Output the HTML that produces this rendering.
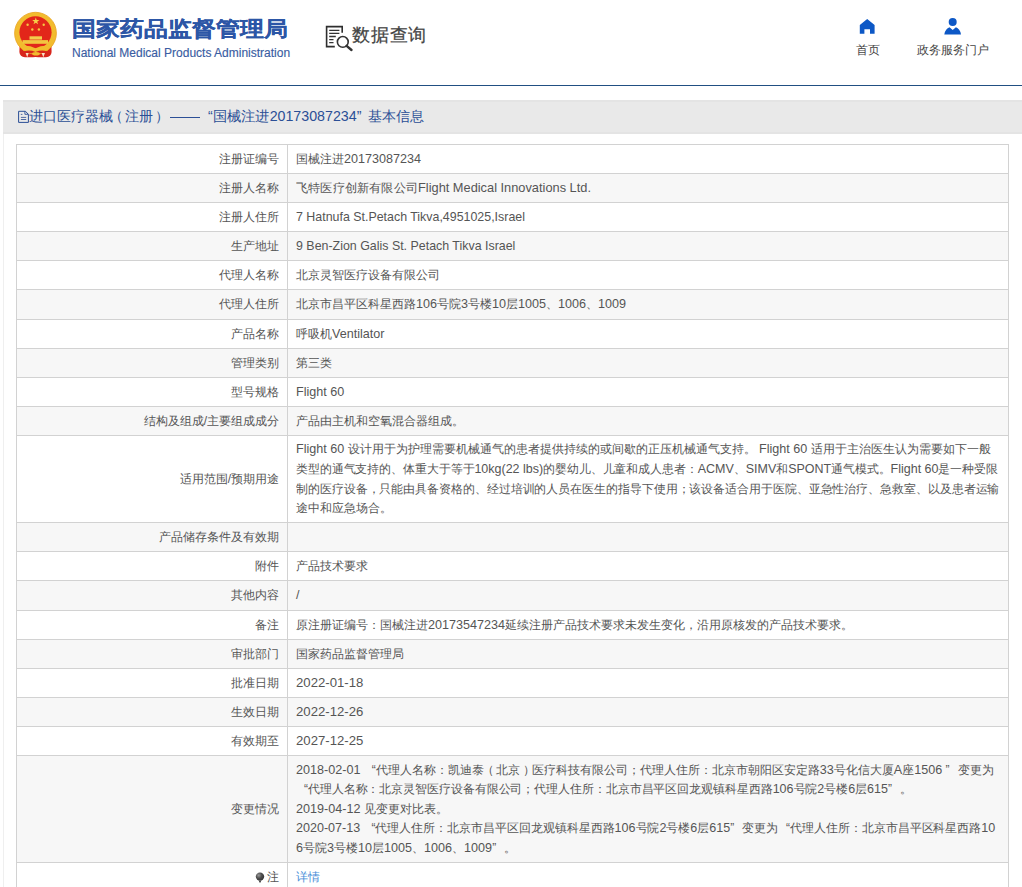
<!DOCTYPE html>
<html><head><meta charset="utf-8">
<style>
html,body{margin:0;padding:0;}
body{width:1022px;height:887px;overflow:hidden;background:#fff;position:relative;font-family:"Liberation Sans",sans-serif;color:#555;}
.abs{position:absolute;}
#title{left:72px;top:13px;font-size:24px;font-weight:bold;color:#2c56a6;line-height:30px;white-space:nowrap;transform:scaleY(0.88);transform-origin:0 26px;-webkit-text-stroke:0.2px #2c56a6;}
#sub{left:72px;top:45px;font-size:12px;color:#3a5da2;-webkit-text-stroke:0.15px #3a5da2;line-height:16px;white-space:nowrap;}
#dq{left:352px;top:22px;font-size:18px;letter-spacing:0.8px;color:#444;-webkit-text-stroke:0.25px #444;line-height:26px;white-space:nowrap;}
.nav{font-size:12px;color:#444;line-height:14px;white-space:nowrap;}
#hline{left:0;top:85px;width:1022px;height:1px;background:#214f82;}
#bar{left:3px;top:100px;width:1019px;height:34px;background:#e9e9e9;box-sizing:border-box;border-top:2px solid #e4e4e4;border-bottom:2px solid #e4e4e4;}
.bt{top:107px;font-size:14px;color:#2b4f96;line-height:18px;white-space:nowrap;}
#lborder{left:3px;top:134px;width:1px;height:753px;background:#efefef;}
#tbl{position:absolute;left:0;top:0;width:1022px;height:887px;font-size:12px;}
.r{position:absolute;left:16px;width:993px;box-sizing:border-box;border:1px solid #d2d2d2;border-bottom:none;background:#fff;}
.r.g{background:#f7f7f7;}
.r .l{position:absolute;left:0;top:0;bottom:0;width:270px;box-sizing:border-box;padding-right:8px;text-align:right;display:flex;align-items:center;justify-content:flex-end;white-space:nowrap;line-height:19.6px;}
.r .v{position:absolute;left:270px;top:0;bottom:0;right:0;box-sizing:border-box;padding-left:8px;border-left:1px solid #d2d2d2;display:flex;align-items:center;white-space:nowrap;overflow:hidden;line-height:19.6px;}
.r .l>*, .r .v>div{position:relative;top:0.5px;}
.e{font-size:12.6px;}
.ql,.qr{display:inline-block;width:12px;}
.ql{text-align:right;}
.qr{text-align:left;}
.ln{transform-origin:0 50%;}
.lnk{color:#4a8ed8;}
</style></head><body>

<!-- emblem -->
<svg class="abs" style="left:0;top:0" width="70" height="70" viewBox="0 0 70 70">
  <path d="M19.6 44.5 H51.4 L51.6 52 Q51.2 57 46 57.2 Q40 57.6 35.5 57 Q31 57.6 25 57.2 Q19.8 57 19.4 52 Z" fill="#d8261c"/>
  <circle cx="35.5" cy="33.2" r="20.9" fill="#f2bc2e"/>
  <circle cx="35.5" cy="33.2" r="20.9" fill="none" stroke="#eaa21e" stroke-width="0.8"/>
  <circle cx="35.5" cy="32.3" r="16.1" fill="#e2261a"/>
  <polygon points="35.8,17.6 36.7,20.1 39.4,20.1 37.2,21.7 38.1,24.3 35.8,22.7 33.5,24.3 34.4,21.7 32.2,20.1 34.9,20.1" fill="#f6d04a"/>
  <circle cx="27.6" cy="24.7" r="1.2" fill="#f4c843"/>
  <circle cx="43.7" cy="24.7" r="1.2" fill="#f4c843"/>
  <circle cx="32.3" cy="29.5" r="1.2" fill="#f4c843"/>
  <circle cx="38.9" cy="29.5" r="1.2" fill="#f4c843"/>
  <rect x="29.5" y="36.3" width="12.5" height="3.3" fill="#f3cd4c"/>
  <rect x="22.6" y="40.1" width="25.4" height="3.7" fill="#f2c640"/>
  <path d="M21 46.3 Q28 44.8 35.5 48.2 Q43 44.8 50 46.3 L47.5 50.6 Q41 48.4 35.5 51.2 Q30 48.4 23.5 50.6 Z" fill="#f2bc2e"/>
  <path d="M24 51.2 Q30 49.6 35.5 52 Q41 49.6 47 51.2 L46.5 53.6 Q41 52 35.5 54 Q30 52 24.5 53.6 Z" fill="#d8261c"/>
  <ellipse cx="36" cy="53.8" rx="3.9" ry="1.8" fill="#f2bc2e"/>
  <path d="M25.6 53 L27.2 57.3 L28.7 53 Z M41.6 53 L43.3 57.3 L45 53 Z" fill="#f6e2c8"/>
</svg>

<div id="title" class="abs">国家药品监督管理局</div>
<div id="sub" class="abs">National Medical Products Administration</div>

<!-- search doc icon -->
<svg class="abs" style="left:324px;top:24px" width="30" height="28" viewBox="0 0 30 28">
  <path d="M10.8 22.6 H2.6 V2.6 H18.2 V8.7" fill="none" stroke="#2e2e2e" stroke-width="1.6"/>
  <path d="M5.2 6.3 H15.4 M5.2 9.4 H15.4 M5.2 12.5 H11.8 M5.2 15.6 H9.5 M5.2 18.7 H9.5" stroke="#333" stroke-width="1.3"/>
  <circle cx="18.8" cy="17.9" r="5.4" fill="none" stroke="#333" stroke-width="1.6"/>
  <path d="M22.6 21.8 L27.5 26" stroke="#333" stroke-width="2.4" stroke-linecap="round"/>
</svg>
<div id="dq" class="abs">数据查询</div>

<!-- home icon -->
<svg class="abs" style="left:858px;top:18px" width="19" height="17" viewBox="0 0 19 17">
  <path d="M9.2 1 L16.6 7 V15.8 H12 V11.2 H6.4 V15.8 H1.8 V7 Z" fill="#0d58c6"/>
</svg>
<div class="abs nav" style="left:856px;top:43px">首页</div>

<!-- user icon -->
<svg class="abs" style="left:942px;top:16px" width="22" height="20" viewBox="0 0 22 20">
  <circle cx="10.7" cy="6.1" r="4" fill="#0d58c6"/>
  <path d="M2.3 18.4 Q3.5 12.5 7.5 11.3 L10.7 14 L13.9 11.3 Q17.9 12.5 19 18.4 Z" fill="#0d58c6"/>
</svg>
<div class="abs nav" style="left:917px;top:43px">政务服务门户</div>

<div id="hline" class="abs"></div>

<div id="bar" class="abs"></div>
<svg class="abs" style="left:14px;top:106px" width="18" height="22" viewBox="0 0 18 22">
  <path d="M4.6 5.3 H11.5 L14.4 8.4 V16.4 H4.6 Z" fill="none" stroke="#2b4f96" stroke-width="1"/>
  <path d="M10.9 5.3 V8.3 H14.4" fill="none" stroke="#2b4f96" stroke-width="0.9"/>
  <path d="M6.8 8.4 H8.4 M6.9 11.4 H12.2 M6.9 13.5 H12.2" stroke="#3d5a98" stroke-width="0.9"/>
</svg>
<div class="abs bt" style="left:29px">进口医疗器械</div>
<div class="abs bt" style="left:109px">（</div>
<div class="abs bt" style="left:125px">注册</div>
<div class="abs bt" style="left:155px">）</div>
<div class="abs" style="left:170px;top:117px;width:30px;height:1px;background:#2b4f96"></div>
<div class="abs bt" style="left:208px;transform:scaleX(1.016);transform-origin:0 50%">“国械注进20173087234”</div>
<div class="abs bt" style="left:368px">基本信息</div>
<div id="lborder" class="abs"></div>

<div id="tbl">
<div class="r" style="top:144px;height:29px"><div class="l"><span>注册证编号</span></div><div class="v"><div>国械注进<span class="e">20173087234</span></div></div></div>
<div class="r g" style="top:173px;height:29px"><div class="l"><span>注册人名称</span></div><div class="v"><div style="transform:scaleX(1.0167);transform-origin:0 50%">飞特医疗创新有限公司<span class="e">Flight Medical Innovations Ltd.</span></div></div></div>
<div class="r" style="top:202px;height:29px"><div class="l"><span>注册人住所</span></div><div class="v"><div style="transform:scaleX(0.985);transform-origin:0 50%"><span class="e">7 Hatnufa St.Petach Tikva,4951025,Israel</span></div></div></div>
<div class="r g" style="top:231px;height:29px"><div class="l"><span>生产地址</span></div><div class="v"><div style="transform:scaleX(0.9855);transform-origin:0 50%"><span class="e">9 Ben-Zion Galis St. Petach Tikva Israel</span></div></div></div>
<div class="r" style="top:260px;height:29px"><div class="l"><span>代理人名称</span></div><div class="v"><div>北京灵智医疗设备有限公司</div></div></div>
<div class="r g" style="top:289px;height:30px"><div class="l"><span>代理人住所</span></div><div class="v"><div>北京市昌平区科星西路<span class="e">106</span>号院<span class="e">3</span>号楼<span class="e">10</span>层<span class="e">1005</span>、<span class="e">1006</span>、<span class="e">1009</span></div></div></div>
<div class="r" style="top:319px;height:29px"><div class="l"><span>产品名称</span></div><div class="v"><div>呼吸机<span class="e">Ventilator</span></div></div></div>
<div class="r g" style="top:348px;height:29px"><div class="l"><span>管理类别</span></div><div class="v"><div>第三类</div></div></div>
<div class="r" style="top:377px;height:29px"><div class="l"><span>型号规格</span></div><div class="v"><div><span class="e">Flight 60</span></div></div></div>
<div class="r g" style="top:406px;height:29px"><div class="l"><span>结构及组成/主要组成成分</span></div><div class="v"><div>产品由主机和空氧混合器组成。</div></div></div>
<div class="r" style="top:435px;height:87px"><div class="l"><span>适用范围/预期用途</span></div><div class="v"><div><div class="ln"><span class="e">Flight 60</span> 设计用于为护理需要机械通气的患者提供持续的或间歇的正压机械通气支持。 <span class="e">Flight 60</span> 适用于主治医生认为需要如下一般</div><div class="ln" style="transform:scaleX(0.9912)">类型的通气支持的、体重大于等于<span class="e">10kg(22 lbs)</span>的婴幼儿、儿童和成人患者：<span class="e">ACMV</span>、<span class="e">SIMV</span>和<span class="e">SPONT</span>通气模式。<span class="e">Flight 60</span>是一种受限</div><div class="ln" style="transform:scaleX(0.9935)">制的医疗设备，只能由具备资格的、经过培训的人员在医生的指导下使用；该设备适合用于医院、亚急性治疗、急救室、以及患者运输</div><div class="ln">途中和应急场合。</div></div></div></div>
<div class="r g" style="top:522px;height:29px"><div class="l"><span>产品储存条件及有效期</span></div><div class="v"><div></div></div></div>
<div class="r" style="top:551px;height:29px"><div class="l"><span>附件</span></div><div class="v"><div>产品技术要求</div></div></div>
<div class="r g" style="top:580px;height:30px"><div class="l"><span>其他内容</span></div><div class="v"><div><span class="e">/</span></div></div></div>
<div class="r" style="top:610px;height:29px"><div class="l"><span>备注</span></div><div class="v"><div>原注册证编号：国械注进<span class="e">20173547234</span>延续注册产品技术要求未发生变化，沿用原核发的产品技术要求。</div></div></div>
<div class="r g" style="top:639px;height:29px"><div class="l"><span>审批部门</span></div><div class="v"><div>国家药品监督管理局</div></div></div>
<div class="r" style="top:668px;height:29px"><div class="l"><span>批准日期</span></div><div class="v"><div style="transform:scaleX(1.045);transform-origin:0 50%"><span class="e">2022-01-18</span></div></div></div>
<div class="r g" style="top:697px;height:29px"><div class="l"><span>生效日期</span></div><div class="v"><div style="transform:scaleX(1.045);transform-origin:0 50%"><span class="e">2022-12-26</span></div></div></div>
<div class="r" style="top:726px;height:29px"><div class="l"><span>有效期至</span></div><div class="v"><div style="transform:scaleX(1.045);transform-origin:0 50%"><span class="e">2027-12-25</span></div></div></div>
<div class="r g" style="top:755px;height:107px"><div class="l"><span>变更情况</span></div><div class="v"><div><div class="ln"><span class="e">2018-02-01</span> <span class="ql">“</span>代理人名称：凯迪泰<span style="position:relative;left:-1.5px">（</span>北京<span style="position:relative;left:3.5px">）</span>医疗科技有限公司；代理人住所：北京市朝阳区安定路<span class="e">33</span>号化信大厦<span class="e">A</span>座<span class="e">1506</span> <span class="qr">”</span>变更为</div><div class="ln" style="transform:scaleX(0.993)"><span class="ql">“</span>代理人名称：北京灵智医疗设备有限公司；代理人住所：北京市昌平区回龙观镇科星西路<span class="e">106</span>号院<span class="e">2</span>号楼<span class="e">6</span>层<span class="e">615</span><span class="qr">”</span>。</div><div class="ln"><span class="e">2019-04-12</span> 见变更对比表。</div><div class="ln" style="transform:scaleX(0.9963)"><span class="e">2020-07-13</span> <span class="ql">“</span>代理人住所：北京市昌平区回龙观镇科星西路<span class="e">106</span>号院<span class="e">2</span>号楼<span class="e">6</span>层<span class="e">615</span><span class="qr">”</span>变更为<span class="ql">“</span>代理人住所：北京市昌平区科星西路<span class="e">10</span></div><div class="ln"><span class="e">6</span>号院<span class="e">3</span>号楼<span class="e">10</span>层<span class="e">1005</span>、<span class="e">1006</span>、<span class="e">1009</span><span class="qr">”</span>。</div></div></div></div>
<div class="r" style="top:862px;height:29px"><div class="l"><span>注</span></div><div class="v"><div><span class="lnk">详情</span></div></div></div>
</div>

<svg class="abs" style="left:254px;top:870px" width="12" height="14" viewBox="0 0 12 14">
  <defs><radialGradient id="bg" cx="0.35" cy="0.35" r="0.7"><stop offset="0" stop-color="#9a9a9a"/><stop offset="0.5" stop-color="#4f4f4f"/><stop offset="1" stop-color="#333"/></radialGradient></defs>
  <circle cx="6" cy="6.6" r="4.2" fill="url(#bg)"/>
  <rect x="5" y="10.6" width="2" height="1.8" fill="#555"/>
</svg>
</body></html>
